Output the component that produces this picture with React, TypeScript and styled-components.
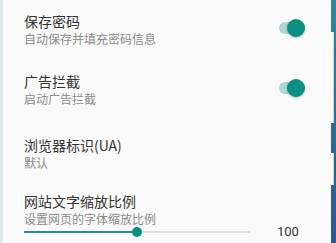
import React from "react";
import styled, { createGlobalStyle } from "styled-components";

const GlobalStyle = createGlobalStyle`
  html, body {
    margin: 0;
    padding: 0;
    background: #fafafa;
  }
  body {
    font-family: "Noto Sans CJK SC", "Noto Sans", sans-serif;
  }
`;

const Screen = styled.div`
  display: flex;
  width: 336px;
  height: 243px;
  overflow: hidden;
  background: #fafafa;
`;

const LeftEdge = styled.div`
  width: 3px;
  background: #dbe9ee;
`;

const Content = styled.div`
  flex: 1;
  padding: 0 26px 0 21px;
`;

const RightEdge = styled.div`
  width: 5px;
  display: flex;
  flex-direction: column;
  background: linear-gradient(180deg, #2a8ba3 0%, #2b6e96 50%, #2d5690 100%);
`;

const EdgePart = styled.div<{ $h: number; $cut?: boolean }>`
  height: ${({ $h }) => $h}px;
  width: ${({ $cut }) => ($cut ? "2px" : "0")};
  background: #fdfdfd;
  border-right: ${({ $cut }) => ($cut ? "1px solid #c9d8e0" : "none")};
`;

const Row = styled.div<{ $top: number }>`
  display: flex;
  align-items: center;
  padding-top: ${({ $top }) => $top}px;
`;

const Texts = styled.div`
  flex: 1;
  display: flex;
  flex-direction: column;
`;

const Title = styled.div`
  font-size: 14px;
  line-height: 19px;
  color: #333333;
`;

const Summary = styled.div`
  font-size: 12px;
  line-height: 16px;
  color: #8a8a8a;
`;

const Switch = styled.div`
  position: relative;
  width: 26px;
  height: 18px;
  margin-top: -3px;
`;

const SwitchTrack = styled.div`
  position: absolute;
  left: 0;
  top: 3px;
  width: 24px;
  height: 12px;
  border-radius: 6px;
  background: #a8d9d3;
`;

const SwitchThumb = styled.div`
  position: absolute;
  right: 0;
  top: 0;
  width: 18px;
  height: 18px;
  border-radius: 50%;
  background: #0b8f80;
  box-shadow: 0 1px 2px rgba(0, 0, 0, 0.25);
`;

const SliderRow = styled.div`
  display: flex;
  align-items: center;
  margin-top: 0px;
  height: 10px;
`;

const Track = styled.div`
  position: relative;
  width: 226px;
  height: 2px;
  background: #dcdcdc;
`;

const TrackFill = styled.div`
  position: absolute;
  left: 0;
  top: 0;
  height: 2px;
  background: #1c9486;
`;

const Thumb = styled.div`
  position: absolute;
  top: -4px;
  width: 10px;
  height: 10px;
  margin-left: -5px;
  border-radius: 50%;
  background: #0b8f80;
`;

const Value = styled.div`
  margin-left: 27px;
  font-family: "Roboto", "Noto Sans", sans-serif;
  font-size: 13px;
  color: #333333;
  line-height: 10px;
`;

function Toggle() {
  return (
    <Switch>
      <SwitchTrack />
      <SwitchThumb />
    </Switch>
  );
}

export default function App() {
  const pos = 113;
  return (
    <>
      <GlobalStyle />
      <Screen>
        <LeftEdge />
        <Content>
          <Row $top={12}>
            <Texts>
              <Title>保存密码</Title>
              <Summary>自动保存并填充密码信息</Summary>
            </Texts>
            <Toggle />
          </Row>
          <Row $top={25}>
            <Texts>
              <Title>广告拦截</Title>
              <Summary>启动广告拦截</Summary>
            </Texts>
            <Toggle />
          </Row>
          <Row $top={29}>
            <Texts>
              <Title>浏览器标识(UA)</Title>
              <Summary>默认</Summary>
            </Texts>
          </Row>
          <Row $top={21}>
            <Texts>
              <Title>网站文字缩放比例</Title>
              <Summary>设置网页的字体缩放比例</Summary>
            </Texts>
          </Row>
          <SliderRow>
            <Track>
              <TrackFill style={{ width: pos }} />
              <Thumb style={{ left: pos }} />
            </Track>
            <Value>100</Value>
          </SliderRow>
        </Content>
        <RightEdge>
          <EdgePart $h={32} />
          <EdgePart $h={91} $cut />
          <EdgePart $h={30} />
          <EdgePart $h={32} $cut />
        </RightEdge>
      </Screen>
    </>
  );
}
